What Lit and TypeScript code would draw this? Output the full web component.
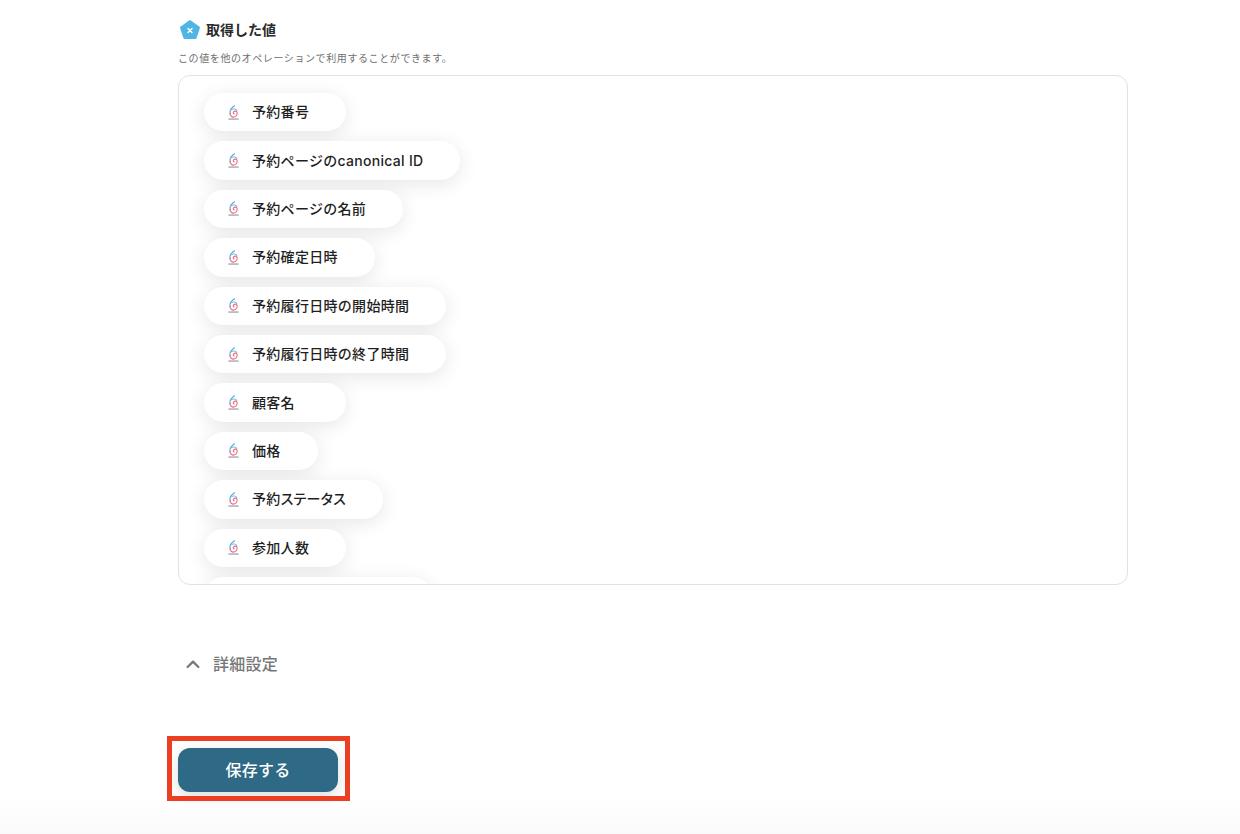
import { LitElement, html, css, svg } from "lit";
import { customElement } from "lit/decorators.js";

const ITEMS: { label: string; tight?: boolean }[] = [
  { label: "予約番号" },
  { label: "予約ページのcanonical ID" },
  { label: "予約ページの名前" },
  { label: "予約確定日時" },
  { label: "予約履行日時の開始時間" },
  { label: "予約履行日時の終了時間" },
  { label: "顧客名　" },
  { label: "価格" },
  { label: "予約ステータス", tight: true },
  { label: "参加人数" },
];

const logo = svg`<svg class="logo" viewBox="0 0 11 15" width="11" height="15" fill="none">
  <path d="M6.8 .5 C4.6 2 2.2 3.8 2 6.6 C1.9 7.6 2.2 8.4 2.6 9" stroke="#4fa9dc" stroke-width="1.1"/>
  <path d="M3.2 5 C5 3.4 8.4 3.8 9 6" stroke="#7fc0e6" stroke-width="1.1"/>
  <path d="M1.8 8 C2 11 4 12.4 6 12 C8.4 11.6 9.6 9.4 9 7.2 C8.4 5.8 6.6 5.8 5.6 6.8 C4.8 7.8 5.4 9 6.6 8.8" stroke="#ec6c7c" stroke-width="1.1"/>
  <rect x=".4" y="13.5" width="10.2" height="1.1" fill="#8a93a0"/>
</svg>`;

@customElement("app-root")
export class AppRoot extends LitElement {
  static styles = css`
    :host {
      display: block;
      position: relative;
      height: 834px;
      overflow: hidden;
      background: linear-gradient(to bottom, #fff 0, #fff 800px, #fafafa 834px);
      font-family: "Inter", "Noto Sans CJK JP", "Noto Sans", sans-serif;
      color: #222;
    }
    .page {
      width: 950px;
      margin-left: 178px;
      padding-top: 20px;
      display: flex;
      flex-direction: column;
      align-items: stretch;
    }
    .head {
      display: flex;
      align-items: center;
      gap: 6px;
      height: 20px;
      padding-left: 2px;
      font-size: 14px;
      font-weight: 700;
      color: #2a2a2a;
    }
    .head span {
      margin-top: -2px;
    }
    .sub {
      margin-top: 11px;
      height: 15px;
      line-height: 15px;
      font-size: 10px;
      letter-spacing: 0.6px;
      color: #6f6f6f;
    }
    .box {
      margin-top: 9px;
      box-sizing: border-box;
      height: 510px;
      border: 1px solid #e2e2e2;
      border-radius: 12px;
      overflow: hidden;
      padding: 17px 25px 0;
      display: flex;
      flex-direction: column;
      align-items: flex-start;
      gap: 10px;
    }
    .pill {
      flex: none;
      box-sizing: border-box;
      height: 38.4px;
      display: flex;
      align-items: center;
      padding: 0 37px 0 24px;
      border-radius: 20px;
      background: #fff;
      box-shadow: 0 4px 20px rgba(0, 0, 0, 0.1);
      font-size: 14px;
      font-weight: 500;
      letter-spacing: 0.3px;
      color: #1f1f1f;
      white-space: nowrap;
    }
    .pill span {
      margin-top: -2px;
    }
    .pill.tight {
      font-feature-settings: "palt";
    }
    .pill.tail {
      width: 228px;
    }
    .logo {
      flex: none;
      margin-right: 13px;
    }
    .advanced {
      margin-top: 66px;
      display: flex;
      align-items: center;
      gap: 13px;
      height: 24px;
      padding-left: 8px;
      font-size: 16px;
      font-weight: 500;
      letter-spacing: 0.25px;
      color: #777;
    }
    .advanced svg {
      margin-top: 1px;
    }
    .save {
      margin-top: 73px;
      width: 160px;
      height: 44px;
      padding: 0 0 2px;
      border: 0;
      border-radius: 12px;
      background: #2e6985;
      color: #fff;
      font: inherit;
      font-size: 16px;
      font-weight: 500;
      letter-spacing: 0.25px;
      box-shadow: 0 4px 14px rgba(0, 0, 0, 0.14);
    }
    .mark {
      position: absolute;
      left: 167px;
      top: 736px;
      width: 183px;
      height: 65px;
      box-sizing: border-box;
      border: 5px solid #ec3e21;
      pointer-events: none;
    }
  `;

  render() {
    return html`
      <div class="page">
        <div class="head">
          <svg width="20" height="20" viewBox="0 0 20 20">
            <path
              d="M10 1.6 18.4 7.7 15.2 17.6 H4.8 L1.6 7.7 Z"
              fill="#4fb6e3"
              stroke="#4fb6e3"
              stroke-width="3"
              stroke-linejoin="round"
            />
            <path d="M8 8.4 12 12.4 M12 8.4 8 12.4" stroke="#fff" stroke-width="1.4" stroke-linecap="round" />
          </svg>
          <span>取得した値</span>
        </div>
        <div class="sub">この値を他のオペレーションで利用することができます。</div>
        <div class="box">
          ${ITEMS.map(
            (t) => html`<div class="pill ${t.tight ? "tight" : ""}">${logo}<span>${t.label}</span></div>`
          )}
          <div class="pill tail"></div>
        </div>
        <div class="advanced">
          <svg width="14" height="10" viewBox="0 0 14 10" fill="none">
            <path d="M1.6 8 7 2.6 12.4 8" stroke="#777" stroke-width="2.2" stroke-linecap="round" stroke-linejoin="round" />
          </svg>
          <span>詳細設定</span>
        </div>
        <button class="save">保存する</button>
      </div>
      <div class="mark"></div>
    `;
  }
}
